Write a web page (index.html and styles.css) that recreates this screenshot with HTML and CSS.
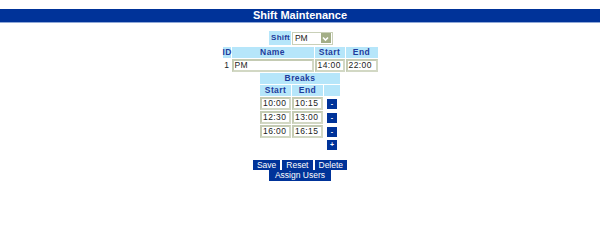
FILE: index.html
```html
<!DOCTYPE html>
<html>
<head>
<meta charset="utf-8">
<link rel="stylesheet" href="styles.css">
</head>
<body>
<div class="title">Shift Maintenance</div>
<div class="content">
  <div class="shift-pick">
    <div class="lbl">Shift</div>
    <div class="select"><span class="sel-text">PM</span><span class="arrow"><svg width="9" height="9" viewBox="0 0 9 9"><path d="M2 3.5 L4.5 6 L7 3.5" fill="none" stroke="#fff" stroke-width="1.6"/></svg></span></div>
  </div>
  <div class="shift-grid">
    <div class="hd id">ID</div>
    <div class="hd">Name</div>
    <div class="hd">Start</div>
    <div class="hd">End</div>
    <div class="cell-id">1</div>
    <div class="field">PM</div>
    <div class="field">14:00</div>
    <div class="field">22:00</div>
  </div>
  <div class="breaks">
    <div class="hd span3">Breaks</div>
    <div class="hd">Start</div>
    <div class="hd">End</div>
    <div class="hd"></div>
    <div class="field">10:00</div>
    <div class="field">10:15</div>
    <div class="btn-cell"><span class="mini">-</span></div>
    <div class="field">12:30</div>
    <div class="field">13:00</div>
    <div class="btn-cell"><span class="mini">-</span></div>
    <div class="field">16:00</div>
    <div class="field">16:15</div>
    <div class="btn-cell"><span class="mini">-</span></div>
    <div></div>
    <div></div>
    <div class="btn-cell"><span class="mini plus">+</span></div>
  </div>
  <div class="actions">
    <div class="row">
      <span class="btn">Save</span>
      <span class="btn">Reset</span>
      <span class="btn">Delete</span>
    </div>
    <div class="row">
      <span class="btn wide">Assign Users</span>
    </div>
  </div>
</div>
</body>
</html>
```

FILE: styles.css
```css
html, body {
  margin: 0;
  padding: 0;
  background: #fff;
}
body {
  padding-top: 9px;
  font-family: "Liberation Sans", Arial, sans-serif;
  font-size: 8px;
  color: #222;
}
.title {
  background: #003399;
  color: #fff;
  font-weight: bold;
  font-size: 11px;
  height: 13px;
  line-height: 13px;
  text-align: center;
  border-bottom: 1px solid #8fa8d8;
}
.content {
  display: flex;
  flex-direction: column;
  align-items: center;
  padding-top: 8px;
}
.shift-pick {
  display: flex;
  align-items: center;
  gap: 1px;
  margin-left: 2px;
}
.lbl {
  background: #b6e6fa;
  color: #1e3c9c;
  font-weight: bold;
  height: 14px;
  line-height: 14px;
  padding: 0 1px 0 2px;
  letter-spacing: 0.2px;
}
.select {
  width: 39px;
  height: 11px;
  border: 1px solid #c9d0b8;
  display: flex;
  align-items: center;
  justify-content: space-between;
  background: #fff;
}
.sel-text {
  padding-left: 2px;
  color: #222;
  font-size: 8.5px;
}
.arrow {
  width: 10px;
  height: 10px;
  background: #a3ae86;
  display: flex;
  align-items: center;
  justify-content: center;
  margin-right: 1px;
}
.shift-grid {
  display: grid;
  grid-template-columns: 8px 82px 30px 32px;
  grid-template-rows: 11px 13px;
  column-gap: 1px;
  row-gap: 1px;
  margin-top: 2px;
}
.hd {
  background: #b6e6fa;
  color: #1e3c9c;
  font-weight: bold;
  text-align: center;
  line-height: 11px;
  height: 11px;
  font-size: 8.5px;
  letter-spacing: 0.4px;
}
.cell-id {
  text-align: center;
  line-height: 13px;
  font-size: 8.5px;
}
.field {
  box-sizing: border-box;
  border: 2px solid #d2d8c4;
  border-top-color: #c4cbb3;
  border-left-color: #c4cbb3;
  height: 13px;
  line-height: 9px;
  padding-left: 1px;
  background: #fff;
  color: #222;
  font-size: 8.5px;
  letter-spacing: 0.4px;
}
.breaks {
  display: grid;
  grid-template-columns: 31px 31px 16px;
  grid-template-rows: 11px 11px 13px 13px 13px 12px;
  column-gap: 1px;
  row-gap: 1px;
  margin-top: 1px;
}
.breaks .hd.span3 {
  grid-column: 1 / 4;
}
.btn-cell {
  display: flex;
  align-items: center;
  justify-content: center;
}
.mini {
  background: #003399;
  color: #fff;
  width: 10px;
  height: 10px;
  line-height: 9px;
  text-align: center;
  font-size: 7px;
  font-weight: bold;
  display: block;
}
.actions {
  margin-top: 9px;
  display: flex;
  flex-direction: column;
  align-items: center;
}
.row {
  display: flex;
  gap: 2px;
}
.btn {
  background: #003399;
  color: #fff;
  height: 10px;
  line-height: 10px;
  padding: 0 4px;
  font-size: 8.5px;
}
.btn.wide {
  padding: 0 6px;
  height: 11px;
  line-height: 11px;
}
```
